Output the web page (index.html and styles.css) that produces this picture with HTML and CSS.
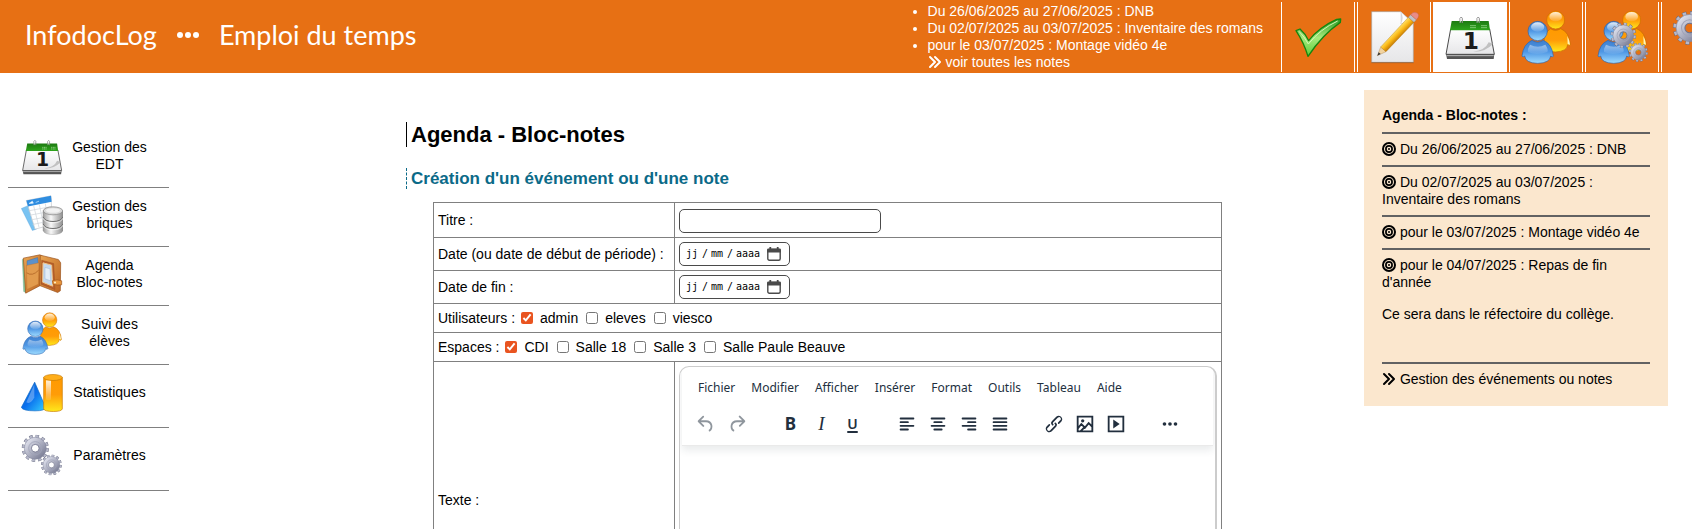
FILE: index.html
```html
<!DOCTYPE html>
<html lang="fr">
<head>
<meta charset="utf-8">
<meta name="viewport" content="width=device-width, initial-scale=1">
<title>InfodocLog - Emploi du temps</title>
<link rel="stylesheet" href="styles.css">
</head>
<body>
<svg class="defs" aria-hidden="true">
  <defs>
    <linearGradient id="gGreen" x1="0" y1="0" x2="0" y2="1"><stop offset="0" stop-color="#2d9a22"/><stop offset=".5" stop-color="#a6ea7c"/><stop offset="1" stop-color="#5ccb3a"/></linearGradient>
    <linearGradient id="gCal" x1="0" y1="0" x2="0" y2="1"><stop offset="0" stop-color="#1d7a12"/><stop offset="1" stop-color="#2ea51c"/></linearGradient>
    <linearGradient id="gPaper" x1="0" y1="0" x2="0" y2="1"><stop offset="0" stop-color="#ffffff"/><stop offset="1" stop-color="#e6e6e8"/></linearGradient>
    <linearGradient id="gYellow" x1="0" y1="0" x2="0" y2="1"><stop offset="0" stop-color="#ff9a00"/><stop offset=".5" stop-color="#ff9c08"/><stop offset="1" stop-color="#ffe81c"/></linearGradient>
    <linearGradient id="gBlue" x1="0" y1="0" x2="0" y2="1"><stop offset="0" stop-color="#3f80cf"/><stop offset=".5" stop-color="#4f97e4"/><stop offset="1" stop-color="#9fdcff"/></linearGradient>
    <linearGradient id="gShine" x1="0" y1="0" x2="0" y2="1"><stop offset="0" stop-color="#fff" stop-opacity=".85"/><stop offset="1" stop-color="#fff" stop-opacity=".1"/></linearGradient>
    <linearGradient id="gGear" x1="0" y1="0" x2="1" y2="1"><stop offset="0" stop-color="#dcdeea"/><stop offset="1" stop-color="#7f8299"/></linearGradient>
    <linearGradient id="gCone" x1="0" y1="0" x2="1" y2="1"><stop offset="0" stop-color="#0a62c8"/><stop offset=".5" stop-color="#0a70ee"/><stop offset="1" stop-color="#36d0ff"/></linearGradient>
    <linearGradient id="gMetal" x1="0" y1="0" x2="1" y2="0"><stop offset="0" stop-color="#9a9a9a"/><stop offset=".4" stop-color="#f8f8f8"/><stop offset="1" stop-color="#8c8c8c"/></linearGradient>
    <linearGradient id="gLeather" x1="0" y1="0" x2="1" y2="1"><stop offset="0" stop-color="#e9a653"/><stop offset="1" stop-color="#bd6420"/></linearGradient>
    <linearGradient id="gPencil" gradientUnits="userSpaceOnUse" x1="80" y1="60" x2="98" y2="78"><stop offset="0" stop-color="#ffe36a"/><stop offset=".5" stop-color="#fbb816"/><stop offset="1" stop-color="#c47a05"/></linearGradient>
  </defs>

  <symbol id="check" viewBox="0 0 156 156">
    <path d="M12 59 24 54Q40 68 50 89 82 48 134 25L146 24 145 34Q92 70 48 136 36 96 12 59Z" fill="url(#gGreen)" stroke="#15860f" stroke-width="4" stroke-linejoin="round"/>
    <path d="M21 61Q38 78 49 99 85 54 137 30" fill="none" stroke="#d2f8b5" stroke-width="3"/>
  </symbol>

  <symbol id="note" viewBox="0 0 156 156">
    <path d="M11 2H98L136 36V154H11Z" fill="url(#gPaper)" stroke="#a9a59f" stroke-width="2"/>
    <path d="M10 155H137" stroke="#86532b" stroke-width="2"/>
    <path d="M98 2V38L136 38Z" fill="#d9d9dc"/>
    <path d="M98 2Q108 22 98 38 118 30 136 38Z" fill="#fff" stroke="#bbb" stroke-width="1"/>
    <path d="M28 134 38 108 54 122Z" fill="#f2d3a0" stroke="#9b7440" stroke-width="1"/>
    <path d="M28 134 32 124 38 129Z" fill="#333"/>
    <path d="M38 108 121 19 138 34 54 122Z" fill="url(#gPencil)" stroke="#a8690a" stroke-width="1"/>
    <path d="M121 19 128 11 145 26 138 34Z" fill="#bfc3ca" stroke="#888" stroke-width="1"/>
    <path d="M128 11Q136 0 148 6 157 14 145 26Z" fill="#e98c86" stroke="#b25c58" stroke-width="1"/>
  </symbol>

  <symbol id="calendar" viewBox="0 0 156 156">
    <path d="M6 129H151L149 144H9Z" fill="#555"/>
    <path d="M20 54H137L151 130H6Z" fill="url(#gPaper)" stroke="#4a4a4a" stroke-width="3"/>
    <path d="M8 134H149" stroke="#bdbdbd" stroke-width="3"/>
    <path d="M23 30H134L138 58H18Z" fill="url(#gCal)"/>
    <path d="M148 98Q122 124 88 122 124 118 134 94Z" fill="#b5b5b5" opacity=".8"/>
    <path d="M48 36V22Q52 14 55 22V36M99 36V22Q103 14 106 22V36" fill="none" stroke="#8d8d8d" stroke-width="3"/>
    <path d="M50 34V21M102 34V21" stroke="#f4f4f4" stroke-width="2"/>
    <path d="M79 44H96M79 50H96M112 44H130M112 50H130" stroke="#a8dd9e" stroke-width="3" stroke-dasharray="4 2"/>
  </symbol>

  <symbol id="users" viewBox="0 0 156 162">
    <path d="M92 56Q106 66 122 56 148 66 151 104 150 110 143 104 142 124 106 126 74 126 72 100 72 68 92 56Z" fill="url(#gYellow)" stroke="#c46c00" stroke-width="2"/>
    <path d="M142 78Q149 90 150 104L143 102Z" fill="#fff3b8"/>
    <circle cx="107" cy="30" r="27" fill="url(#gYellow)" stroke="#cc6c00" stroke-width="2"/>
    <ellipse cx="107" cy="20" rx="19" ry="14" fill="url(#gShine)"/>
    <path d="M36 91Q53 102 70 91 96 102 100 138 98 144 92 138 90 159 53 160 16 159 14 138 8 144 6 138 10 102 36 91Z" fill="url(#gBlue)" stroke="#2f64ad" stroke-width="2"/>
    <path d="M30 104Q54 116 76 104 86 118 82 126 50 138 24 126 22 116 30 104Z" fill="url(#gShine)" opacity=".55"/>
    <circle cx="53" cy="63" r="29" fill="url(#gBlue)" stroke="#2f64ad" stroke-width="2"/>
    <ellipse cx="53" cy="51" rx="20" ry="14" fill="url(#gShine)"/>
  </symbol>

  <symbol id="gear" viewBox="0 0 100 100">
    <circle cx="50" cy="50" r="43" fill="none" stroke="#65687f" stroke-width="13" stroke-dasharray="12 10.5"/>
    <circle cx="50" cy="50" r="43" fill="none" stroke="#b7b9ca" stroke-width="10" stroke-dasharray="10 12.5" stroke-dashoffset="-1"/>
    <circle cx="50" cy="50" r="27" fill="none" stroke="url(#gGear)" stroke-width="26"/>
    <circle cx="50" cy="50" r="40" fill="none" stroke="#83869d" stroke-width="2"/>
    <circle cx="50" cy="50" r="24" fill="none" stroke="#a0a3b8" stroke-width="3"/>
    <circle cx="50" cy="50" r="14" fill="none" stroke="#6f728b" stroke-width="3"/>
  </symbol>

  <symbol id="gears" viewBox="0 0 156 156">
    <use href="#gear" x="2" y="0" width="102" height="102"/>
    <use href="#gear" x="74" y="74" width="78" height="78"/>
  </symbol>

  <symbol id="users-gears" viewBox="0 0 156 162">
    <use href="#users" width="156" height="162"/>
    <use href="#gear" x="43" y="37" width="78" height="78"/>
    <use href="#gear" x="98" y="98" width="58" height="58"/>
  </symbol>

  <symbol id="bricks" viewBox="0 0 126 126">
    <path d="M1 42 24 32 46 104 34 108Z" fill="#79c3f2" stroke="#4b9ad6" stroke-width="1"/>
    <path d="M16 18 90 4 94 90 42 104Z" fill="#fff" stroke="#c0c4ca" stroke-width="2"/>
    <path d="M16 18 90 4 92 22 21 36Z" fill="#2f8de0"/>
    <path d="M23 49 92 36M27 62 92 50M31 76 92 64M35 90 92 78M38 34 54 98M55 30 68 94M73 27 82 90" stroke="#ccd1d8" stroke-width="2"/>
    <path d="M24 27 34 20 37 26ZM44 24 54 20" fill="#fff" stroke="#d8efff" stroke-width="2"/>
    <path d="M66 48V108Q70 120 96 120 122 120 126 108V48Z" fill="url(#gMetal)" stroke="#8a8a8a" stroke-width="1"/>
    <path d="M66 67Q72 81 96 81 120 81 126 67M66 88Q72 102 96 102 120 102 126 88" fill="none" stroke="#6f6f6f" stroke-width="3"/>
    <path d="M66 71Q72 85 96 85 120 85 126 71M66 92Q72 106 96 106 120 106 126 92" fill="none" stroke="#fff" stroke-width="2"/>
    <ellipse cx="96" cy="49" rx="29" ry="12" fill="#dadada" stroke="#818181" stroke-width="2"/>
    <ellipse cx="96" cy="48" rx="21" ry="7" fill="#f2f2f2"/>
  </symbol>

  <symbol id="wallet" viewBox="0 0 126 126">
    <path d="M4 18 14 15 16 118 8 114Z" fill="#83c99e" stroke="#5c8f6d" stroke-width="1"/>
    <path d="M7 14 56 4 64 8 58 96 14 119Z" fill="url(#gLeather)" stroke="#99501a" stroke-width="2"/>
    <path d="M18 22 50 12 52 34 18 44Z" fill="#5c91c9" stroke="#385f8c" stroke-width="1"/>
    <path d="M16 36 54 28 52 92 18 108Z" fill="#e29b4d" stroke="#b46826" stroke-width="1"/>
    <path d="M17 58Q34 70 53 50" fill="none" stroke="#a85b1e" stroke-width="2"/>
    <path d="M58 5 112 18 119 28 118 112 110 117 56 96Z" fill="url(#gLeather)" stroke="#99501a" stroke-width="2"/>
    <path d="M62 20 98 30 102 108 60 92Z" fill="#b9602a" stroke="#8b441a" stroke-width="1"/>
    <path d="M66 28 92 35 95 98 65 86Z" fill="#c4d8ee" stroke="#f1c98c" stroke-width="3"/>
    <path d="M72 42 87 46 89 82 72 76Z" fill="#e4eef7" stroke="#85a7c8" stroke-width="1"/>
    <path d="M94 82Q108 76 122 82V94Q108 96 96 92Z" fill="#e8953a" stroke="#9b511b" stroke-width="2"/>
    <circle cx="102" cy="87" r="3" fill="#fff3c8"/>
  </symbol>

  <symbol id="stats" viewBox="0 0 126 126">
    <path d="M41 32 1 108Q6 118 42 118 72 118 74 108Z" fill="url(#gCone)" stroke="#0b66c4" stroke-width="2"/>
    <path d="M40 38 16 92Q28 100 40 78Z" fill="#fff" opacity=".3"/>
    <path d="M68 18V112Q70 120 97 120 122 120 124 112V18Z" fill="url(#gYellow)" stroke="#c87a00" stroke-width="2"/>
    <path d="M75 26H90V84Q82 88 75 84Z" fill="url(#gShine)"/>
    <ellipse cx="96" cy="18" rx="28" ry="9" fill="#ffae1a" stroke="#c87a00" stroke-width="2"/>
  </symbol>

  <symbol id="chevrons" viewBox="0 0 14 14">
    <path d="M2 2 7 7 2 12M7 2 12 7 7 12" fill="none" stroke="currentColor" stroke-width="2" stroke-linecap="round" stroke-linejoin="round"/>
  </symbol>
  <symbol id="bullseye" viewBox="0 0 14 14">
    <circle cx="7" cy="7" r="6" fill="none" stroke="currentColor" stroke-width="2"/>
    <circle cx="7" cy="7" r="3.100" fill="none" stroke="currentColor" stroke-width="1.700"/>
    <circle cx="7" cy="7" r="1" fill="currentColor"/>
  </symbol>
  <symbol id="date-icon" viewBox="0 0 14 14">
    <rect x=".8" y="2.500" width="12.400" height="10.700" rx="1.500" fill="none" stroke="currentColor" stroke-width="1.400"/>
    <path d="M0 5.400V3Q0 1.600 1.500 1.600H12.500Q14 1.600 14 3V5.400ZM2.400 0H4.200V2H2.400ZM9.800 0H11.600V2H9.800Z" fill="currentColor"/>
  </symbol>
</svg>

<header class="topbar">
  <div class="brand"><a href="#">InfodocLog</a><svg class="brand-dots" viewBox="0 0 22 6" aria-hidden="true"><circle cx="3" cy="3" r="3"/><circle cx="11" cy="3" r="3"/><circle cx="19" cy="3" r="3"/></svg><span>Emploi du temps</span></div>
  <ul class="news">
    <li>Du 26/06/2025 au 27/06/2025 : DNB</li>
    <li>Du 02/07/2025 au 03/07/2025 : Inventaire des romans</li>
    <li>pour le 03/07/2025 : Montage vidéo 4e</li>
    <li class="news-all"><a href="#"><svg class="mini"><use href="#chevrons"/></svg> voir toutes les notes</a></li>
  </ul>
  <nav class="tabs" aria-label="Modules">
    <a class="tab" href="#" aria-label="Validation"><svg><use href="#check"/></svg></a>
    <a class="tab" href="#" aria-label="Saisie"><svg><use href="#note"/></svg></a>
    <a class="tab tab-active" href="#" aria-label="Emploi du temps"><svg viewBox="0 0 156 156"><use href="#calendar"/><text x="56" y="113" class="cal-day">1</text></svg></a>
    <a class="tab" href="#" aria-label="Utilisateurs"><svg><use href="#users"/></svg></a>
    <a class="tab" href="#" aria-label="Gestion des utilisateurs"><svg><use href="#users-gears"/></svg></a>
    <a class="tab" href="#" aria-label="Paramètres"><svg><use href="#gears"/></svg></a>
  </nav>
</header>

<div class="page">
  <nav class="side" aria-label="Emploi du temps">
    <a class="side-item" href="#"><svg viewBox="0 0 156 156"><use href="#calendar"/><text x="56" y="113" class="cal-day">1</text></svg><span>Gestion des EDT</span></a>
    <a class="side-item" href="#"><svg><use href="#bricks"/></svg><span>Gestion des briques</span></a>
    <a class="side-item" href="#"><svg><use href="#wallet"/></svg><span>Agenda<br>Bloc-notes</span></a>
    <a class="side-item" href="#"><svg><use href="#users"/></svg><span>Suivi des élèves</span></a>
    <a class="side-item side-tall" href="#"><svg><use href="#stats"/></svg><span>Statistiques</span></a>
    <a class="side-item side-tall" href="#"><svg><use href="#gears"/></svg><span>Paramètres</span></a>
  </nav>

  <main class="content">
    <h1>Agenda - Bloc-notes</h1>
    <h2>Création d'un événement ou d'une note</h2>
    <form>
      <table class="form-table">
        <tr>
          <td class="label-cell"><label for="titre">Titre :</label></td>
          <td class="title-cell"><input class="field" id="titre" type="text"></td>
        </tr>
        <tr>
          <td class="label-cell"><label for="debut">Date (ou date de début de période) :</label></td>
          <td>
            <div class="field date" role="group" aria-label="Date de début">
              <input id="debut" class="seg" type="text" placeholder="jj" aria-label="Jour">/<input class="seg" type="text" placeholder="mm" aria-label="Mois">/<input class="seg seg-year" type="text" placeholder="aaaa" aria-label="Année">
              <button type="button" aria-label="Ouvrir le calendrier"><svg><use href="#date-icon"/></svg></button>
            </div>
          </td>
        </tr>
        <tr>
          <td class="label-cell"><label for="fin">Date de fin :</label></td>
          <td>
            <div class="field date" role="group" aria-label="Date de fin">
              <input id="fin" class="seg" type="text" placeholder="jj" aria-label="Jour">/<input class="seg" type="text" placeholder="mm" aria-label="Mois">/<input class="seg seg-year" type="text" placeholder="aaaa" aria-label="Année">
              <button type="button" aria-label="Ouvrir le calendrier"><svg><use href="#date-icon"/></svg></button>
            </div>
          </td>
        </tr>
        <tr>
          <td colspan="2"><div class="checks"><span>Utilisateurs :</span>
            <label><input type="checkbox" checked>admin</label>
            <label><input type="checkbox">eleves</label>
            <label><input type="checkbox">viesco</label></div></td>
        </tr>
        <tr>
          <td colspan="2"><div class="checks"><span>Espaces :</span>
            <label><input type="checkbox" checked>CDI</label>
            <label><input type="checkbox">Salle 18</label>
            <label><input type="checkbox">Salle 3</label>
            <label><input type="checkbox">Salle Paule Beauve</label></div></td>
        </tr>
        <tr>
          <td class="label-cell"><label for="texte">Texte :</label></td>
          <td>
            <div class="editor">
              <div class="editor-head">
                <div class="menubar">
                  <button type="button">Fichier</button><button type="button">Modifier</button><button type="button">Afficher</button><button type="button">Insérer</button><button type="button">Format</button><button type="button">Outils</button><button type="button">Tableau</button><button type="button">Aide</button>
                </div>
                <div class="toolbar">
                  <div class="group">
                    <button type="button" disabled aria-label="Annuler"><svg viewBox="0 0 24 24"><path d="M6.400 8H12c3.700 0 6.200 2 6.800 5.100.6 2.700-.4 5.600-2.300 6.800a1 1 0 0 1-1-1.800c1.100-.6 1.800-2.700 1.400-4.600-.5-2.100-2.100-3.500-4.900-3.500H6.400l3.300 3.300a1 1 0 1 1-1.400 1.400l-5-5a1 1 0 0 1 0-1.400l5-5a1 1 0 0 1 1.400 1.400L6.400 8Z"/></svg></button>
                    <button type="button" disabled aria-label="Rétablir"><svg viewBox="0 0 24 24"><path d="M17.600 10H12c-2.800 0-4.400 1.400-4.900 3.500-.4 2 .3 4 1.400 4.600a1 1 0 1 1-1 1.800c-2-1.200-2.900-4.100-2.300-6.800.6-3 3-5.100 6.800-5.100h5.600l-3.300-3.300a1 1 0 1 1 1.400-1.400l5 5a1 1 0 0 1 0 1.400l-5 5a1 1 0 0 1-1.400-1.400l3.300-3.300Z"/></svg></button>
                  </div>
                  <div class="group">
                    <button type="button" class="tb-bold" aria-label="Gras">B</button>
                    <button type="button" class="tb-italic" aria-label="Italique">I</button>
                    <button type="button" class="tb-underline" aria-label="Souligné">U</button>
                  </div>
                  <div class="group">
                    <button type="button" aria-label="Aligner à gauche"><svg viewBox="0 0 24 24"><path class="ln" d="M5 6H19M5 10H13M5 14H19M5 18H13"/></svg></button>
                    <button type="button" aria-label="Centrer"><svg viewBox="0 0 24 24"><path class="ln" d="M5 6H19M8 10H16M5 14H19M8 18H16"/></svg></button>
                    <button type="button" aria-label="Aligner à droite"><svg viewBox="0 0 24 24"><path class="ln" d="M5 6H19M11 10H19M5 14H19M11 18H19"/></svg></button>
                    <button type="button" aria-label="Justifier"><svg viewBox="0 0 24 24"><path class="ln" d="M5 6H19M5 10H19M5 14H19M5 18H19"/></svg></button>
                  </div>
                  <div class="group">
                    <button type="button" aria-label="Lien"><svg viewBox="0 0 24 24"><path d="M6.200 12.300a1 1 0 0 1 1.400 1.400l-2 2a2 2 0 1 0 2.600 2.800l4.800-4.800a1 1 0 0 0 0-1.400 1 1 0 1 1 1.400-1.300 2.900 2.900 0 0 1 0 4L9.600 20a3.900 3.900 0 0 1-5.500-5.500l2-2Zm11.600-.6a1 1 0 0 1-1.400-1.400l2-2a2 2 0 1 0-2.600-2.800L11 10.300a1 1 0 0 0 0 1.400A1 1 0 1 1 9.600 13a2.900 2.900 0 0 1 0-4L14.400 4a3.900 3.900 0 0 1 5.500 5.500l-2 2Z"/></svg></button>
                    <button type="button" aria-label="Image"><svg viewBox="0 0 24 24"><path class="ol" d="M4 4H20V20H4ZM4 17 8 12 12 16 16 11 20 15M7 20 12 15"/><circle cx="9.500" cy="8.500" r="1.800"/></svg></button>
                    <button type="button" aria-label="Média"><svg viewBox="0 0 24 24"><path class="ol" d="M4 4H20V20H4Z"/><path d="M9 7V17L16 12Z"/></svg></button>
                  </div>
                  <div class="group">
                    <button type="button" aria-label="Plus"><svg viewBox="0 0 24 24"><circle cx="6" cy="12" r="2"/><circle cx="12" cy="12" r="2"/><circle cx="18" cy="12" r="2"/></svg></button>
                  </div>
                </div>
              </div>
              <textarea id="texte"></textarea>
            </div>
          </td>
        </tr>
      </table>
    </form>
  </main>

  <aside class="notes">
    <p class="notes-title">Agenda - Bloc-notes :</p>
    <hr>
    <p><svg class="mini"><use href="#bullseye"/></svg> Du 26/06/2025 au 27/06/2025 : DNB</p>
    <hr>
    <p><svg class="mini"><use href="#bullseye"/></svg> Du 02/07/2025 au 03/07/2025 :<br>Inventaire des romans</p>
    <hr>
    <p><svg class="mini"><use href="#bullseye"/></svg> pour le 03/07/2025 : Montage vidéo 4e</p>
    <hr>
    <p><svg class="mini"><use href="#bullseye"/></svg> pour le 04/07/2025 : Repas de fin<br>d'année</p>
    <p class="notes-detail">Ce sera dans le réfectoire du collège.</p>
    <hr>
    <p><a href="#"><svg class="mini"><use href="#chevrons"/></svg> Gestion des événements ou notes</a></p>
  </aside>
</div>
</body>
</html>
```
FILE: styles.css
```css
* { box-sizing: border-box; }

body {
  margin: 0;
  height: 100vh;
  overflow: auto;
  scrollbar-width: none;
  background: #fff;
  color: #000;
  font: 14px/17px "Liberation Sans", Arial, sans-serif;
}

a { color: inherit; text-decoration: none; }
p { margin: 0; }
.defs { position: absolute; width: 0; height: 0; }
.mini { width: 14px; height: 14px; vertical-align: -2px; }
.cal-day { font: bold 70px "DejaVu Sans", sans-serif; fill: #1c1c1c; }

/* Top bar */
.topbar {
  display: grid;
  grid-template-columns: 1fr auto 411px;
  height: 73px;
  overflow: hidden;
  background: #e77014;
  color: #fff;
}
.brand {
  display: flex;
  align-items: center;
  gap: 20px;
  padding: 0 0 4px 25px;
  font: 27px/32px Lato, sans-serif;
}
.brand-dots { width: 22px; height: 6px; fill: #fff; }
.news { margin: 0; padding: 3px 18px 0 0; }
.news-all { list-style: none; }
.tabs { display: flex; gap: 2px; padding: 2px 0 1px; overflow: hidden; }
.tab {
  flex: 0 0 74px;
  display: grid;
  place-items: center;
  border: solid #fff;
  border-width: 0 1px;
}
.tab-active { background: #fff; }
.tab svg { width: 52px; height: 54px; }

/* Page columns */
.page { display: flex; align-items: flex-start; padding: 0 24px 0 8px; }

.side { flex: 0 0 161px; padding-top: 56px; }
.side-item {
  display: flex;
  align-items: center;
  gap: 8px;
  height: 59px;
  padding: 0 21px 4px 13px;
  border-bottom: 1px solid #808080;
  text-align: center;
}
.side-tall { height: 63px; padding-bottom: 8px; }
.side-item svg { flex: 0 0 42px; height: 43px; }
.side-item span { flex: 1; }

.content { flex: 1; margin: 49px 115px 0 237px; }
h1, h2 { margin: 0; padding-left: 4px; }
h1 { border-left: 1px solid #000; font-size: 22px; line-height: 25px; }
h2 {
  margin: 21px 0 13px;
  border-left: 1px dashed #0b6a88;
  color: #0b6a88;
  font-size: 17px;
  line-height: 21px;
}
form { padding: 0 27px; }

/* Form table */
.form-table { width: 100%; border-collapse: collapse; }
.form-table td { height: 29px; padding: 4px; border: 1px solid #808080; }
.form-table .title-cell { padding-top: 6px; }
.form-table .label-cell { width: 241px; }
.field {
  display: block;
  width: 202px;
  height: 24px;
  padding: 0 6px;
  border: 1px solid #4a4a4a;
  border-radius: 5px;
  background: #fff;
}
.date {
  display: flex;
  align-items: center;
  justify-content: space-between;
  width: 111px;
  padding: 0 8px 0 6px;
  font: 10px/12px "DejaVu Sans Mono", monospace;
}
.seg { width: 13px; padding: 0; border: 0; background: none; font: inherit; }
.seg-year { width: 25px; }
.seg::placeholder { color: #000; opacity: 1; }
.date button { padding: 0; border: 0; background: none; color: #4a4a4a; }
.date svg { display: block; width: 14px; height: 14px; margin-left: 3px; }

.checks { display: flex; align-items: center; gap: 8px; }
.checks > span { margin-right: -2px; }
.checks label { display: flex; align-items: center; gap: 7px; }
.checks input { width: 12px; height: 12px; margin: 0; accent-color: #e95420; }

/* Rich text editor */
.editor {
  display: flex;
  flex-direction: column;
  height: 268px;
  border: 2px solid #ccc;
  border-width: 1px 2px 2px 1px;
  border-radius: 10px;
  overflow: hidden;
}
.editor-head {
  margin: 0 2px;
  padding: 6px 0 3px 8px;
  border-bottom: 1px solid #eaeaea;
  box-shadow: 0 4px 8px rgba(34, 47, 62, .1);
  color: #222f3e;
}
.menubar { display: flex; height: 30px; }
.menubar button {
  padding: 0 8px;
  border: 0;
  background: none;
  color: inherit;
  font: 12px/16px "Noto Sans", sans-serif;
}
.toolbar { display: flex; gap: 23px; height: 36px; margin-top: 3px; }
.group { display: flex; }
.toolbar button {
  display: grid;
  place-items: center;
  width: 31px;
  padding: 0;
  border: 0;
  background: none;
  color: inherit;
}
.toolbar button:disabled { opacity: .5; }
.toolbar svg { width: 22px; height: 22px; fill: currentColor; }
.toolbar .ln { fill: none; stroke: currentColor; stroke-width: 2; stroke-linecap: round; }
.toolbar .ol { fill: none; stroke: currentColor; stroke-width: 2; }
.toolbar .tb-bold { font: bold 17px/20px "Noto Sans", sans-serif; }
.toolbar .tb-italic { font: italic 19px/20px "Liberation Serif", serif; }
.toolbar .tb-underline { font: 600 14px/20px "Noto Sans", sans-serif; text-decoration: underline 2px; text-underline-offset: 2px; }
.editor textarea { flex: 1; border: 0; background: none; resize: none; outline: 0; }

/* Notes panel */
.notes {
  flex: 0 0 304px;
  margin-top: 17px;
  padding: 17px 18px 18px;
  background: #fbe7ce;
}
.notes hr { height: 2px; margin: 7px 0; border: 0; background: #626262; }
.notes-title { margin-bottom: 8px; font-weight: bold; }
.notes-detail { margin: 15px 0 39px; }
```
